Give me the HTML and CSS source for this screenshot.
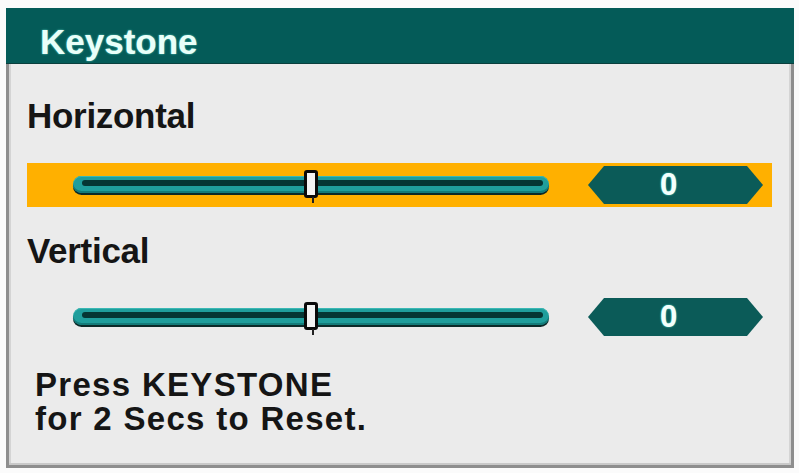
FILE: index.html
```html
<!DOCTYPE html>
<html>
<head>
<meta charset="utf-8">
<title>Keystone</title>
<link rel="stylesheet" href="styles.css">
</head>
<body>
<div class="osd">
  <div class="osd-header">Keystone</div>
  <div class="osd-panel">
    <div class="label">Horizontal</div>
    <div class="row row-active">
      <div class="track">
        <div class="thumb"></div>
      </div>
      <div class="value"><span>0</span></div>
    </div>
    <div class="label label-second">Vertical</div>
    <div class="row">
      <div class="track">
        <div class="thumb"></div>
      </div>
      <div class="value"><span>0</span></div>
    </div>
    <div class="hint">
      <div class="hint-line">Press KEYSTONE</div>
      <div class="hint-line">for 2 Secs to Reset.</div>
    </div>
  </div>
</div>
</body>
</html>
```
FILE: styles.css
```css
html, body {
  margin: 0;
  padding: 0;
  background: #fbfbfb;
}

body {
  font-family: "Liberation Sans", Arial, sans-serif;
  font-weight: bold;
}

.osd {
  width: 788px;
  padding: 8px 0 0 6px;
}

.osd-header {
  height: 43px;
  padding: 12px 0 0 34px;
  line-height: 43px;
  font-size: 35px;
  color: #e9fff9;
  background: #045b58;
  border-bottom: 1px solid #0a3f3d;
  text-shadow: 0 0 2px #5fd6c8;
}

.osd-panel {
  background: #ebebeb;
  border: 3px solid #8e8e8e;
  border-top: none;
  padding: 32px 19px 29px 18px;
  box-shadow: inset 0 -2px 0 #c9c9c9, inset 2px 0 0 #d4d4d4, inset -2px 0 0 #d4d4d4;
}

.label {
  height: 40px;
  line-height: 40px;
  font-size: 35px;
  letter-spacing: -0.3px;
  color: #151515;
  margin-bottom: 27px;
}

.label-second {
  margin-bottom: 24px;
}

.row {
  height: 44px;
  display: flex;
  align-items: center;
  padding: 0 9px 0 46px;
  margin-bottom: 24px;
}

.row-active {
  background: #ffb000;
}

.track {
  position: relative;
  width: 476px;
  height: 17px;
  margin-top: -2px;
  border-radius: 9px;
  background: #1f9e9c;
  box-shadow: 0 2px 0 #0b2a29, inset 0 1px 0 #3ab8b4, inset 0 -2px 0 #137b79;
}

.track::before {
  content: "";
  position: absolute;
  left: 9px;
  right: 6px;
  top: 4px;
  height: 6px;
  border-radius: 3px;
  background: #053634;
}

.thumb {
  position: absolute;
  left: 231px;
  top: -6px;
  width: 8px;
  height: 22px;
  background: #f3f3f3;
  border: 3px solid #0a0a0a;
  border-radius: 3px;
}

.thumb::after {
  content: "";
  position: absolute;
  left: 5px;
  top: 24px;
  width: 2px;
  height: 6px;
  background: #222;
}

.value {
  margin-left: auto;
  width: 175px;
  height: 38px;
  display: flex;
  align-items: center;
  justify-content: center;
  background: #0b5b58;
  clip-path: polygon(0 50%, 16px 0, calc(100% - 16px) 0, 100% 50%, calc(100% - 16px) 100%, 16px 100%);
}

.value span {
  font-size: 31px;
  line-height: 38px;
  color: #f4fffc;
  margin-right: 14px;
  text-shadow: 0 0 2px #4cc7b9, 0 0 1px #4cc7b9;
}

.hint {
  margin: 29px 0 0 8px;
  font-size: 33px;
  letter-spacing: 1.3px;
  color: #151515;
}

.hint-line {
  height: 34px;
  line-height: 34px;
}
```
